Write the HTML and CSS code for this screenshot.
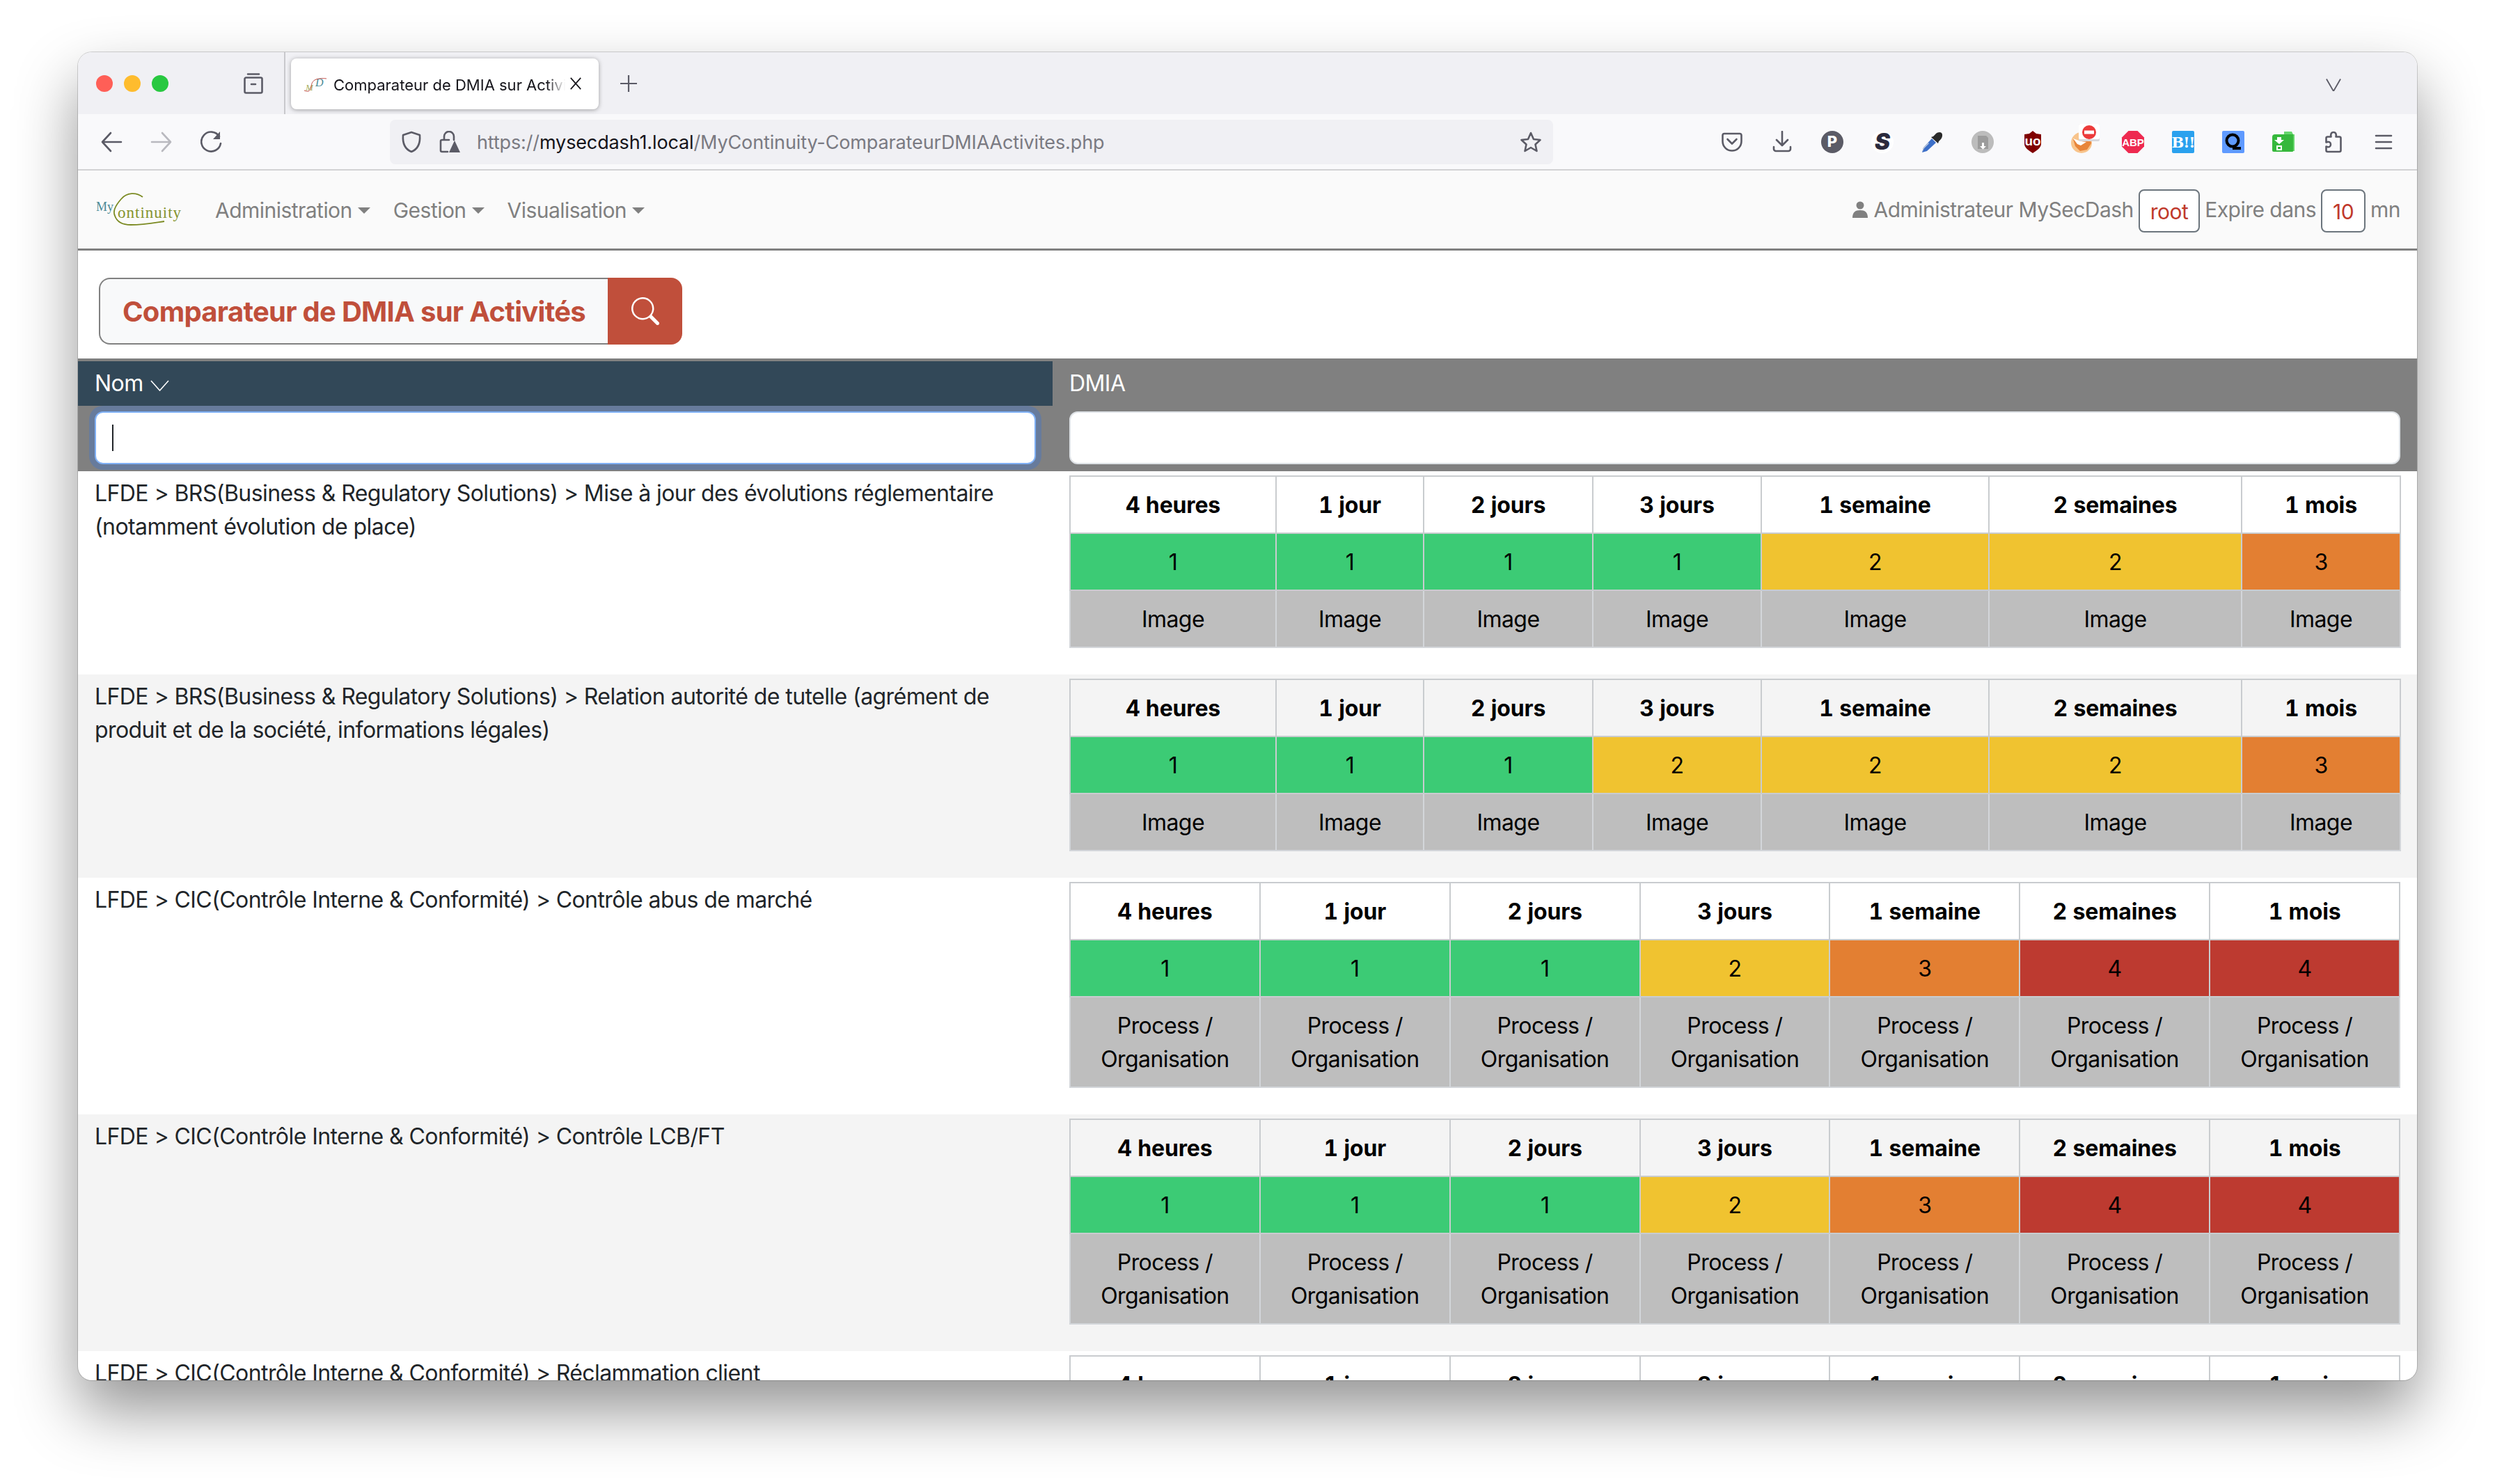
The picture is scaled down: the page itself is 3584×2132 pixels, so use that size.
FILE: index.html
```html
<!DOCTYPE html>
<html lang="fr">
<head>
<meta charset="utf-8">
<title>Comparateur de DMIA sur Activités</title>
<link rel="stylesheet" href="styles.css">
</head>
<body>
<div class="window">
  <div class="tabbar">
    <div class="lights"><span class="dot red"></span><span class="dot amber"></span><span class="dot green"></span></div>
    <svg class="ic fxview" viewBox="0 0 32 32"><path d="M8 2.500h16M3.500 9.500a2 2 0 0 1 2-2h21a2 2 0 0 1 2 2v18a2 2 0 0 1-2 2h-21a2 2 0 0 1-2-2zM13 17h6"/></svg>
    <span class="tabsep"></span>
    <div class="tab">
      <svg class="favicon" viewBox="0 0 34 24"><text class="fav-m" x="3" y="21">M</text><text class="fav-d" x="17" y="15">D</text><path class="fav-s" d="M1 21c7 3 9 0 10-6 1-7 4-10 12-11 4-.5 7-.5 10 0"/></svg>
      <span class="tabtitle">Comparateur de DMIA sur Activités</span>
      <svg class="ic tabclose" viewBox="0 0 20 20"><path d="M2 1l16 18M18 1L2 19"/></svg>
    </div>
    <svg class="ic plus" viewBox="0 0 26 26"><path d="M13 1v24M1 13h24"/></svg>
    <svg class="ic listall" viewBox="0 0 24 24"><path d="M1 5l11 19L23 5"/></svg>
  </div>

  <div class="toolbar">
    <div class="navbtns">
      <svg class="ic" viewBox="0 0 32 32"><path d="M30 16H3M15 3L3 16l12 13"/></svg>
      <svg class="ic off" viewBox="0 0 32 32"><path d="M2 16h27M17 3l12 13-12 13"/></svg>
      <svg class="ic" viewBox="0 0 32 32"><path d="M27 8a14 14 0 1 0 2 10"/><path class="solid" d="M28 1v11H18z"/></svg>
    </div>
    <div class="urlbar">
      <svg class="ic shield" viewBox="0 0 30 32"><path d="M15 2l12 4c1 12-2 20-12 24C5 26 2 18 3 6z"/></svg>
      <svg class="ic lock" viewBox="0 0 32 32"><path d="M8 13V8a7 7 0 0 1 14 0v5M15 13H5a2 2 0 0 0-2 2v13a2 2 0 0 0 2 2h8"/><path class="solid" d="M23 14l8 17H15z"/></svg>
      <span class="url"><span class="url-dim">https://</span>mysecdash1.local<span class="url-dim">/MyContinuity-ComparateurDMIAActivites.php</span></span>
      <svg class="ic star" viewBox="0 0 32 32"><path d="M16 3l4 9 9.500 1-7 6.500 2 9.500-8.500-5-8.500 5 2-9.500-7-6.500 9.500-1z"/></svg>
    </div>
    <div class="exts">
      <svg class="ic" viewBox="0 0 32 32"><path d="M5 4h22a2.500 2.500 0 0 1 2.500 2.500V15a13.500 13.500 0 0 1-27 0V6.500A2.500 2.500 0 0 1 5 4zM9.500 12l6.500 6.500 6.500-6.500"/></svg>
      <svg class="ic" viewBox="0 0 32 32"><path d="M16 1v20M8 13l8 8 8-8M4 23v3a3 3 0 0 0 3 3h18a3 3 0 0 0 3-3v-3"/></svg>
      <svg class="ext" viewBox="0 0 32 32"><circle class="f-gray" cx="16" cy="16" r="16"/><text class="ext-p" x="16" y="23">P</text></svg>
      <svg class="ext" viewBox="0 0 32 32"><circle class="f-white" cx="16" cy="16" r="16"/><text class="ext-s" x="16" y="27">S</text></svg>
      <svg class="ext" viewBox="0 0 32 32"><path class="f-blue" d="M1 31l2-7 12-13 6 6-13 12z"/><path class="f-pale" d="M1 31l2-7 7-7 1 1-7 7z"/><path class="f-black" d="M14 9l3-1 3-3c2-3 7-4 9-2s1 7-1 9l-3 3-1 3z"/></svg>
      <svg class="ext" viewBox="0 0 32 32"><circle class="f-lgray" cx="16" cy="16" r="16"/><path class="f-dim" d="M9 7h12l3 3v16H9z"/><path class="f-white" d="M12 22h3v-5h3v5h3l-4.500 4.500z"/></svg>
      <svg class="ext" viewBox="0 0 32 32"><path class="f-maroon" d="M16 0l5 4 7 1v14c0 5-6 9-12 13C10 28 4 24 4 19V5l7-1z"/><text class="ext-ub" x="16" y="21">uo</text></svg>
      <svg class="ext ext-fox" viewBox="0 0 32 42"><circle class="f-orange-l" cx="14" cy="27" r="15"/><path class="f-orange" d="M2 22l12 4 12-8 2 10-6 9-10 2-7-7z"/><path class="f-white" d="M2 21l11 4 8 1-8 5-5-2z"/><rect class="f-shadow" x="10" y="0" width="30" height="25" rx="2"/><rect class="f-white" x="10" y="0" width="30" height="22" rx="2"/><circle class="f-stop" cx="25" cy="12" r="10"/><rect class="f-white" x="18" y="9.500" width="14" height="5"/></svg>
      <svg class="ext" viewBox="0 0 32 32"><path class="f-abp" d="M9.500 0h13L32 9.500v13L22.500 32h-13L0 22.500v-13z"/><text class="ext-abp" x="16" y="21.500">ABP</text></svg>
      <svg class="ext" viewBox="0 0 32 32"><rect class="f-sky" width="32" height="32" rx="2"/><text class="ext-b" x="16" y="24">B!!</text></svg>
      <svg class="ext" viewBox="0 0 32 32"><rect class="f-qblue" width="32" height="32" rx="2"/><circle class="q-ring" cx="15" cy="14" r="8.500"/><path class="q-tail" d="M15 25h12"/></svg>
      <svg class="ext" viewBox="0 0 32 32"><path class="f-green-l" d="M17 1h11l2 4h2v24H17z"/><path class="f-green" d="M0 9a4 4 0 0 1 4-4h26v24a1 1 0 0 1-1 1H2a2 2 0 0 1-2-2z"/><path class="f-white" d="M7 9h6v4h4l-7 6-7-6h4zM6 21h8v7H6zM8 23v3h4v-3z"/></svg>
      <svg class="ic" viewBox="0 0 32 32"><path d="M16 1.500c-3 0-4.500 2.500-3.500 6.500H7.500a2 2 0 0 0-2 2v6c4-1.500 6.500-.5 6.500 3s-2.500 4.500-6.500 3v5.500a2 2 0 0 0 2 2h17a2 2 0 0 0 2-2V10a2 2 0 0 0-2-2h-5c1-4-.5-6.500-3.500-6.500z" transform="translate(0 .5)"/></svg>
      <svg class="ic" viewBox="0 0 32 32"><path d="M5 7h22M5 16h22M5 25h22"/></svg>
    </div>
  </div>

  <nav class="appnav">
    <svg class="logo" viewBox="0 0 122 50"><text class="logo-my" x="0" y="27">My</text><text class="logo-on" x="31" y="37">ontinuity</text><path class="logo-c" d="M67 7C58 0 44 0 36 10 28 19 24 28 27 34c3 9 11 13 23 13 18 0 34-3 48-5"/></svg>
    <a class="menu">Administration</a>
    <a class="menu">Gestion</a>
    <a class="menu">Visualisation</a>
    <div class="session">
      <svg class="usericon" viewBox="0 0 22 24"><circle cx="11" cy="6" r="5.500"/><path d="M0 24c0-8 4-11 11-11s11 3 11 11z"/></svg>
      <span>Administrateur MySecDash</span>
      <span class="tag tag-root">root</span>
      <span>Expire dans</span>
      <span class="tag tag-min">10</span>
      <span>mn</span>
    </div>
  </nav>

  <div class="titlewrap">
    <div class="titlebox">Comparateur de DMIA sur Activités</div>
    <button class="searchbtn" type="button"><svg class="searchicon" viewBox="0 0 16 16"><path d="M11.742 10.344a6.500 6.500 0 1 0-1.397 1.398h-.001q.044.060.098.115l3.850 3.850a1 1 0 0 0 1.415-1.414l-3.850-3.850a1 1 0 0 0-.115-.1zM12 6.500a5.500 5.500 0 1 1-11 0 5.500 5.500 0 0 1 11 0"/></svg></button>
  </div>

  <table class="grid">
    <colgroup><col class="col-name"><col></colgroup>
    <thead>
      <tr class="head">
        <th class="head-name">Nom<svg class="sorticon" viewBox="0 0 27 16"><path d="M1 1l12.500 14L26 1"/></svg></th>
        <th>DMIA</th>
      </tr>
      <tr class="filters">
        <th><span class="filterwrap"><input class="filter filter-focus" type="text" aria-label="Nom"><span class="caret"></span></span></th>
        <th><input class="filter" type="text" aria-label="DMIA"></th>
      </tr>
    </thead>
    <tbody>
      <tr>
        <td>LFDE &gt; BRS(Business &amp; Regulatory Solutions) &gt; Mise à jour des évolutions réglementaire (notamment évolution de place)</td>
        <td><table class="dmia dmia-img">
          <tr><th>4 heures</th><th>1 jour</th><th>2 jours</th><th>3 jours</th><th>1 semaine</th><th>2 semaines</th><th>1 mois</th></tr>
          <tr><td class="l1">1</td><td class="l1">1</td><td class="l1">1</td><td class="l1">1</td><td class="l2">2</td><td class="l2">2</td><td class="l3">3</td></tr>
          <tr class="impact"><td>Image</td><td>Image</td><td>Image</td><td>Image</td><td>Image</td><td>Image</td><td>Image</td></tr>
        </table></td>
      </tr>
      <tr>
        <td>LFDE &gt; BRS(Business &amp; Regulatory Solutions) &gt; Relation autorité de tutelle (agrément de produit et de la société, informations légales)</td>
        <td><table class="dmia dmia-img">
          <tr><th>4 heures</th><th>1 jour</th><th>2 jours</th><th>3 jours</th><th>1 semaine</th><th>2 semaines</th><th>1 mois</th></tr>
          <tr><td class="l1">1</td><td class="l1">1</td><td class="l1">1</td><td class="l2">2</td><td class="l2">2</td><td class="l2">2</td><td class="l3">3</td></tr>
          <tr class="impact"><td>Image</td><td>Image</td><td>Image</td><td>Image</td><td>Image</td><td>Image</td><td>Image</td></tr>
        </table></td>
      </tr>
      <tr>
        <td>LFDE &gt; CIC(Contrôle Interne &amp; Conformité) &gt; Contrôle abus de marché</td>
        <td><table class="dmia">
          <tr><th>4 heures</th><th>1 jour</th><th>2 jours</th><th>3 jours</th><th>1 semaine</th><th>2 semaines</th><th>1 mois</th></tr>
          <tr><td class="l1">1</td><td class="l1">1</td><td class="l1">1</td><td class="l2">2</td><td class="l3">3</td><td class="l4">4</td><td class="l4">4</td></tr>
          <tr class="impact"><td>Process / Organisation</td><td>Process / Organisation</td><td>Process / Organisation</td><td>Process / Organisation</td><td>Process / Organisation</td><td>Process / Organisation</td><td>Process / Organisation</td></tr>
        </table></td>
      </tr>
      <tr>
        <td>LFDE &gt; CIC(Contrôle Interne &amp; Conformité) &gt; Contrôle LCB/FT</td>
        <td><table class="dmia">
          <tr><th>4 heures</th><th>1 jour</th><th>2 jours</th><th>3 jours</th><th>1 semaine</th><th>2 semaines</th><th>1 mois</th></tr>
          <tr><td class="l1">1</td><td class="l1">1</td><td class="l1">1</td><td class="l2">2</td><td class="l3">3</td><td class="l4">4</td><td class="l4">4</td></tr>
          <tr class="impact"><td>Process / Organisation</td><td>Process / Organisation</td><td>Process / Organisation</td><td>Process / Organisation</td><td>Process / Organisation</td><td>Process / Organisation</td><td>Process / Organisation</td></tr>
        </table></td>
      </tr>
      <tr>
        <td>LFDE &gt; CIC(Contrôle Interne &amp; Conformité) &gt; Réclammation client</td>
        <td><table class="dmia">
          <tr><th>4 heures</th><th>1 jour</th><th>2 jours</th><th>3 jours</th><th>1 semaine</th><th>2 semaines</th><th>1 mois</th></tr>
          <tr><td class="l1">1</td><td class="l1">1</td><td class="l1">1</td><td class="l2">2</td><td class="l3">3</td><td class="l4">4</td><td class="l4">4</td></tr>
          <tr class="impact"><td>Process / Organisation</td><td>Process / Organisation</td><td>Process / Organisation</td><td>Process / Organisation</td><td>Process / Organisation</td><td>Process / Organisation</td><td>Process / Organisation</td></tr>
        </table></td>
      </tr>
    </tbody>
  </table>
</div>
</body>
</html>
```
FILE: styles.css
```css
* { box-sizing: border-box; }
html, body { margin: 0; height: 100%; }
body {
  background: #fff;
  padding: 75px 112px 0;
  font-family: Inter, "Liberation Sans", sans-serif;
  font-size: 32px;
  line-height: 48px;
  letter-spacing: -.57px;
  color: #212529;
  overflow: hidden;
}
.window {
  width: 3360px;
  height: 1908px;
  border-radius: 20px;
  overflow: hidden;
  background: #fff;
  box-shadow: 0 0 0 1px rgba(0,0,0,.16), 0 44px 88px rgba(0,0,0,.42);
}

/* Browser chrome */
.ic { width: 32px; height: 32px; flex: none; fill: none; stroke: #5b5b66; stroke-width: 2.6; stroke-linecap: round; stroke-linejoin: round; }
.ic .solid { fill: #5b5b66; stroke: none; }
.ic.off { opacity: .4; }
.tabbar { height: 89px; background: #f0f0f4; display: flex; align-items: center; letter-spacing: 0; }
.lights { display: flex; gap: 16px; margin-left: 26px; }
.dot { width: 24px; height: 24px; border-radius: 50%; }
.dot.red { background: #ff5f57; }
.dot.amber { background: #febc2e; }
.dot.green { background: #28c840; }
.fxview { margin-left: 106px; }
.tabsep { width: 2px; align-self: stretch; background: #c8c8cc; margin-left: 28px; }
.tab { margin-left: 8px; width: 442px; height: 73px; margin-top: 2px; background: #fff; border-radius: 8px; box-shadow: 0 1px 6px rgba(0,0,0,.35); display: flex; align-items: center; padding: 0 24px 0 18px; }
.favicon { width: 34px; height: 24px; flex: none; }
.fav-m { font: italic 13px "Liberation Serif", serif; fill: #a8b060; }
.fav-d { font: italic 16px "Liberation Serif", serif; fill: #4a8a96; }
.fav-s { fill: none; stroke: #c0504a; stroke-width: 1; }
.tabtitle {
  margin-left: 9px; width: 334px; font-size: 22px; line-height: 30px; margin-top: 2px; color: #15141a; white-space: nowrap; overflow: hidden;
  -webkit-mask-image: linear-gradient(90deg, #000 92%, transparent);
  mask-image: linear-gradient(90deg, #000 92%, transparent);
}
.tabclose { width: 18px; height: 22px; margin-left: 6px; margin-top: -2px; stroke: #15141a; stroke-width: 1.9; stroke-linecap: butt; }
.plus { width: 26px; height: 26px; margin-left: 30px; stroke-width: 2.2; stroke-linecap: butt; }
.listall { width: 24px; height: 22px; margin-left: auto; margin-right: 108px; stroke-width: 2; stroke-linecap: butt; stroke-linejoin: miter; }

.toolbar { height: 81px; background: #f9f9fb; border-bottom: 2px solid #d2d2d4; display: flex; align-items: center; padding: 0 32px; letter-spacing: 0; }
.navbtns { display: flex; gap: 40px; }
.urlbar { margin-left: 240px; width: 1671px; height: 64px; border-radius: 8px; background: #f0f0f4; display: flex; align-items: center; padding: 0 16px; }
.shield { width: 30px; }
.lock { margin-left: 24px; }
.url { margin-left: 23px; margin-top: 2px; font-size: 27px; color: #15141a; white-space: nowrap; letter-spacing: -.13px; }
.url-dim { color: #7a7a82; }
.star { margin-left: auto; }
.exts { margin-left: auto; display: flex; gap: 40px; align-items: center; }
.ext { width: 32px; height: 32px; flex: none; overflow: visible; }
.ext-fox { height: 42px; margin-top: -10px; }
.ext text { text-anchor: middle; }
.ext-p { font: 800 22px Inter, sans-serif; fill: #fff; }
.ext-s { font: italic 900 33px Inter, sans-serif; fill: #2b2a3c; }
.ext-ub { font: 700 19px "Liberation Sans", sans-serif; fill: #fff; }
.ext-abp { font: 800 15px "Liberation Sans", sans-serif; fill: #fff; }
.ext-b { font: 700 21px "DejaVu Serif", serif; fill: #fff; letter-spacing: -1px; }
.f-gray { fill: #5b5b66; }
.f-white { fill: #fff; }
.f-blue { fill: #3d6fc8; }
.f-pale { fill: #c8d0dc; }
.f-black { fill: #2a2a2a; }
.f-lgray { fill: #bcbcbc; }
.f-dim { fill: #9c9c9c; }
.f-maroon { fill: #800000; }
.f-orange-l { fill: #f8c48c; }
.f-orange { fill: #e8853a; }
.f-shadow { fill: #d8d8dc; }
.f-stop { fill: #ec3b3b; }
.f-abp { fill: #ee2a50; }
.f-sky { fill: #2aa1ee; }
.f-qblue { fill: #5f9aff; }
.f-green { fill: #36b83c; }
.f-green-l { fill: #66d66c; }
.q-ring { fill: none; stroke: #000; stroke-width: 4; }
.q-tail { stroke: #000; stroke-width: 4; }

/* Application navbar */
.appnav { height: 115px; background: #fafafa; border-bottom: 3px solid #808080; display: flex; align-items: center; padding: 0 24px 0 26px; color: #808080; font-size: 30px; letter-spacing: -.53px; }
.logo { width: 122px; height: 50px; flex: none; overflow: visible; }
.logo-my { font: 18px "Liberation Serif", serif; fill: #4a8a96; letter-spacing: 0; }
.logo-on { font: 23px "Liberation Serif", serif; fill: #85932e; letter-spacing: 1px; }
.logo-c { fill: none; stroke: #7b8a22; stroke-width: 1.8; }
.menu { display: flex; align-items: center; margin-left: 33px; margin-top: 2px; }
.menu:first-of-type { margin-left: 49px; }
.menu::after { content: ""; margin-left: 8px; border-top: 9px solid #808080; border-left: 9px solid transparent; border-right: 9px solid transparent; }
.session { margin-left: auto; display: flex; align-items: center; gap: 7px; }
.usericon { width: 22px; height: 24px; fill: #808080; margin-right: 2px; }
.tag { height: 62px; line-height: 60px; margin-top: 4px; padding: 0 15px; background: #fff; border: 2px solid #6c757d; border-radius: 8px; color: #c0392b; }

/* Page title */
.titlewrap { display: flex; padding: 39px 0 20px 30px; }
.titlebox { height: 96px; padding: 0 32px; background: #f8f9fa; border: 2px solid #808080; border-right: 0; border-radius: 16px 0 0 16px; color: #c04f3b; font-size: 40px; font-weight: 700; line-height: 94px; letter-spacing: -.72px; white-space: nowrap; }
.searchbtn { width: 107px; height: 96px; padding: 0; border: 0; background: #c04f3b; border-radius: 0 16px 16px 0; display: flex; align-items: center; justify-content: center; }
.searchicon { width: 40px; height: 40px; fill: #fff; }

/* Main grid */
.grid { width: 3360px; table-layout: fixed; border-collapse: separate; border-spacing: 0; }
.col-name { width: 1400px; }
.grid > thead th { text-align: left; font-weight: 400; padding: 0 24px; }
.head th { height: 68px; background: #808080; color: #fff; border-top: 4px solid #808080; line-height: 64px; }
.grid > thead .head .head-name { background: #324858; }
.sorticon { width: 27px; height: 16px; fill: none; stroke: #fff; stroke-width: 1.6; margin-left: 10px; }
.filters th { height: 94px; background: #808080; padding-top: 8px !important; vertical-align: top; }
.filterwrap { display: block; position: relative; }
.filter { display: block; width: 100%; height: 76px; border: 2px solid #dee2e6; border-radius: 12px; background: #fff; padding: 0 24px; }
.filter-focus { border-color: #7fb0f5; box-shadow: 0 0 0 8px #677b9c; outline: 0; }
.caret { position: absolute; left: 25px; top: 19px; width: 2px; height: 38px; background: #212529; }
.grid > tbody > tr > td { padding: 8px 24px 4px; vertical-align: top; }
.grid > tbody > tr > td:last-child { padding: 6px 24px; }
.grid > tbody > tr:nth-child(even) > td { background: #f4f4f4; }

/* Nested DMIA tables */
.dmia { width: 100%; margin-bottom: 32px; border-collapse: collapse; color: #000; text-align: center; }
.dmia th, .dmia td { padding: 17px 16px 15px; border: 2px solid #c9cccf; }
.dmia th { font-weight: 700; letter-spacing: -.15px; font-variant-numeric: tabular-nums; }
.dmia-img { table-layout: fixed; }
.dmia-img th:nth-child(1) { width: 296px; }
.dmia-img th:nth-child(2) { width: 212px; }
.dmia-img th:nth-child(3) { width: 243px; }
.dmia-img th:nth-child(4) { width: 242px; }
.dmia-img th:nth-child(5) { width: 327px; }
.dmia-img th:nth-child(6) { width: 363px; }
.dmia-img th:nth-child(7) { width: 228px; }
.dmia .l1 { background: #3ccb75; }
.dmia .l2 { background: #f0c330; }
.dmia .l3 { background: #e37f32; }
.dmia .l4 { background: #bd3a30; }
.dmia .impact td { background: #bebebe; border-color: #d3d6da; }
```
